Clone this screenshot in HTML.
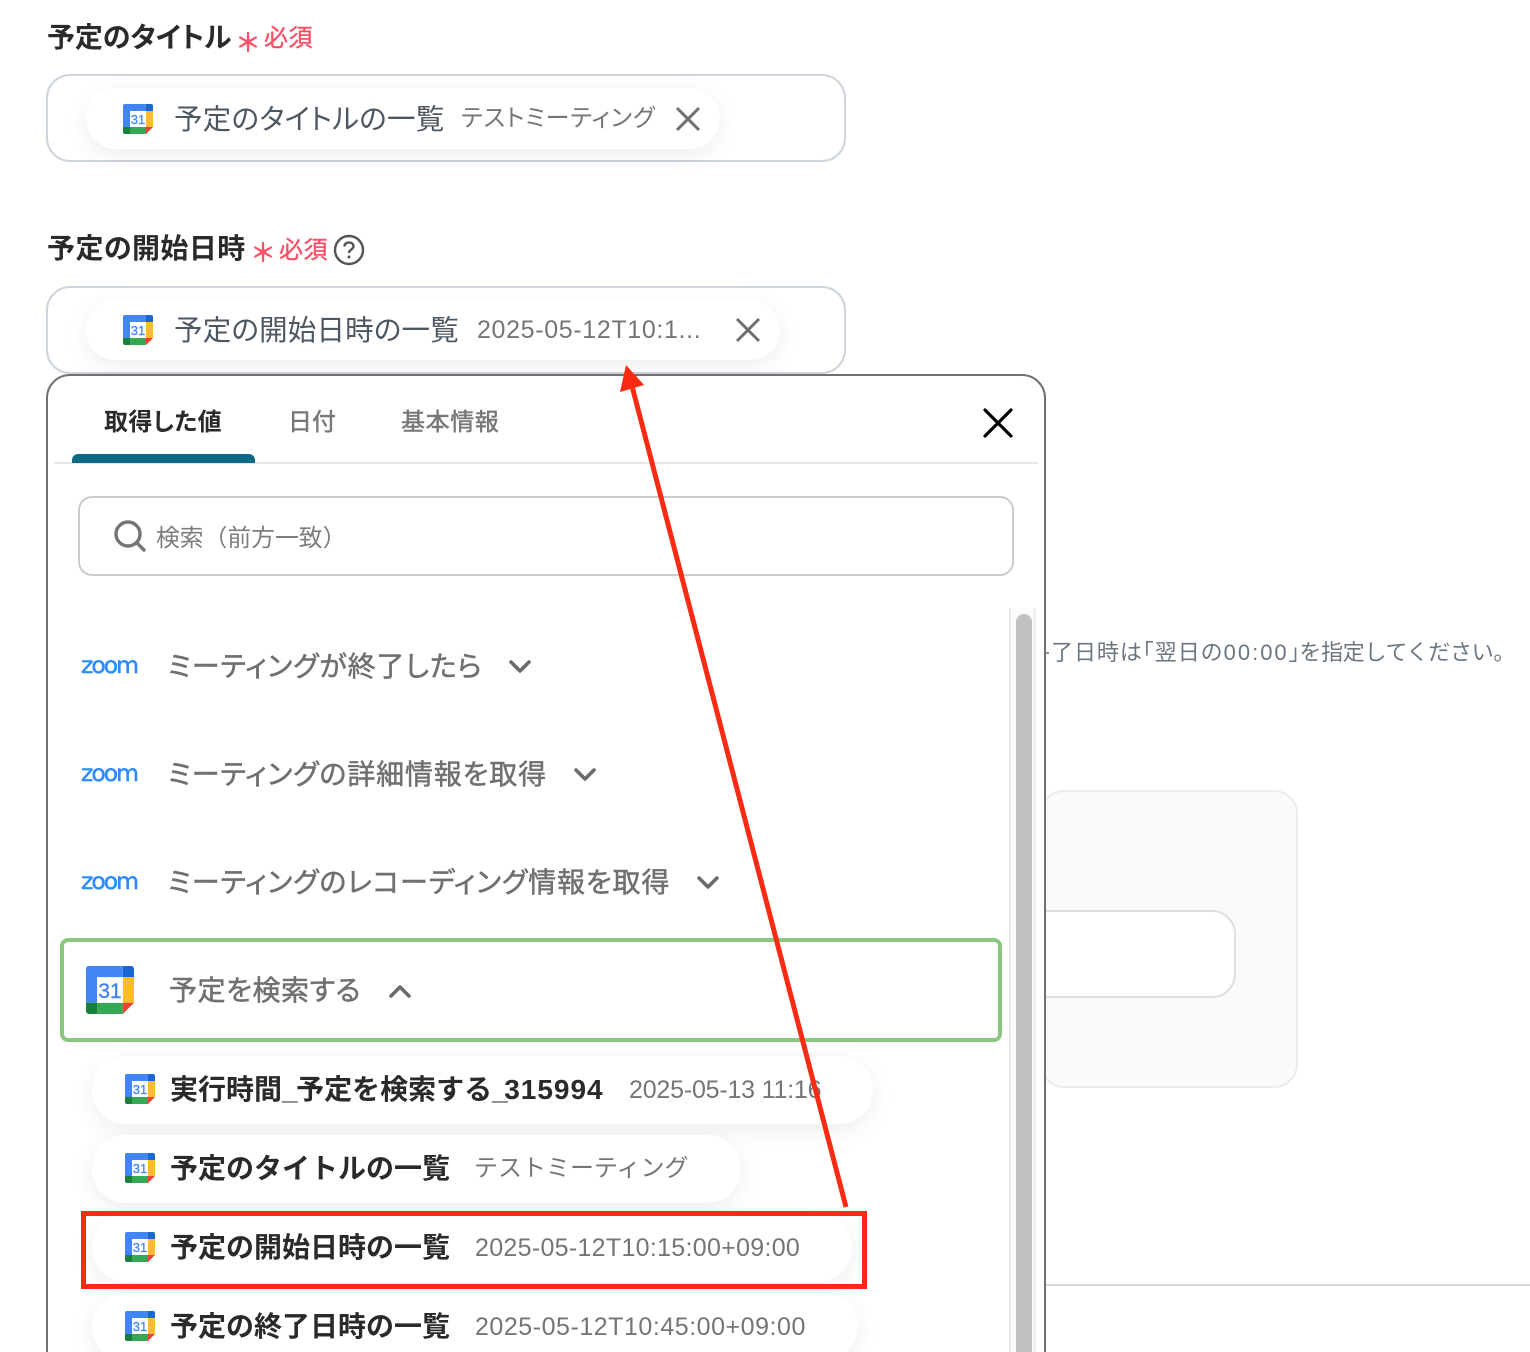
<!DOCTYPE html>
<html lang="ja"><head><meta charset="utf-8"><style>
html,body{margin:0;padding:0;background:#fff}
#p{position:relative;width:1530px;height:1352px;overflow:hidden;background:#fff;font-family:"Liberation Sans","Noto Sans CJK JP",sans-serif}
#p div,#p span.a,#p svg.a{position:absolute;white-space:nowrap;box-sizing:border-box}
.lab{font-size:28px;font-weight:700;color:#2a2a2a;line-height:36px;font-feature-settings:"palt"}
.req{font-size:24px;color:#fb5168;line-height:36px;letter-spacing:.5px;-webkit-text-stroke:.4px #fb5168}
.box{left:46px;width:800px;height:88px;border:2px solid #ced4db;border-radius:24px;background:#fff}
.chip{background:#fff;border-radius:32px;box-shadow:0 6px 24px rgba(0,0,0,.07)}
.ct{font-size:28.500px;color:#4d5761;line-height:40px;font-feature-settings:"palt"}
.cv{font-size:25px;color:#757575;line-height:36px;letter-spacing:.3px}
.tab{font-size:24px;color:#777;line-height:34px;-webkit-text-stroke:.5px #777}
.sec{font-size:28px;color:#707070;line-height:40px;font-feature-settings:"palt";-webkit-text-stroke:.5px #707070;letter-spacing:.85px}
.it{font-size:28px;font-weight:700;color:#2a2a2a;line-height:40px}
.ast{font-size:26px;line-height:36px;color:#fb5168;font-weight:700}
</style></head><body><div id="p">
<svg width="0" height="0" style="position:absolute"><defs>
<symbol id="cal" viewBox="0 0 30 30">
<path d="M2 0H23V7H7V23H0V2Q0 0 2 0Z" fill="#4285f4"/>
<path d="M23 0H28Q30 0 30 2V7H23Z" fill="#1967d2"/>
<rect x="23" y="7" width="7" height="16" fill="#fcbc2c"/>
<rect x="7" y="23" width="16" height="7" fill="#34a853"/>
<path d="M0 23H7V30H2Q0 30 0 28Z" fill="#188038"/>
<path d="M23 23H30L23 30Z" fill="#ea4335"/>
<rect x="7" y="7" width="16" height="16" fill="#fff"/>
<text x="15" y="20" text-anchor="middle" font-family="Liberation Sans" font-size="13" fill="#4285f4" stroke="#4285f4" stroke-width=".25">31</text>
</symbol>
<symbol id="zm" viewBox="0 0 60 22"><text x="1" y="18" textLength="58" lengthAdjust="spacing" font-family="DejaVu Sans" font-size="23.500" fill="#2d8cff" stroke="#2d8cff" stroke-width=".5">zoom</text></symbol>
</defs></svg>

<!-- background page -->
<div style="left:1040px;top:790px;width:258px;height:298px;background:#fafafa;border:2px solid #ececec;border-radius:24px"></div>
<div style="left:1000px;top:910px;width:236px;height:88px;background:#fff;border:2px solid #dcdfe3;border-radius:24px"></div>
<div style="left:1040px;top:1284px;width:490px;height:2px;background:#d5d9de"></div>
<div style="left:1046px;top:652px;width:3px;height:2px;background:#8a939b"></div>
<div style="left:1051px;top:637px;font-size:22px;line-height:32px;color:#6b7680"><span style="letter-spacing:.95px">了日時は｢翌日の</span><span style="letter-spacing:2px">00:00</span><span style="letter-spacing:-.3px">｣を指定してください。</span></div>

<!-- field 1 -->
<div class="lab" style="left:47px;top:20px;letter-spacing:-.1px">予定のタイトル</div>
<div class="ast" style="left:235px;top:25px">＊</div>
<div class="req" style="left:264px;top:21px">必須</div>
<div class="box" style="top:74px"></div>
<div class="chip" style="left:86px;top:88px;width:634px;height:61px"></div>
<svg class="a" style="left:123px;top:104px" width="30" height="30"><use href="#cal"/></svg>
<div class="ct" style="left:174px;top:100px;letter-spacing:.3px">予定のタイトルの一覧</div>
<div class="cv" style="left:461px;top:101px;font-size:24px;letter-spacing:.8px;font-feature-settings:'palt'">テストミーティング</div>
<svg class="a" style="left:675px;top:106px" width="26" height="26" fill="none" stroke="#6f6f6f" stroke-width="3"><path d="M2 2L24 24M24 2L2 24"/></svg>

<!-- field 2 -->
<div class="lab" style="left:47px;top:231px;letter-spacing:.45px">予定の開始日時</div>
<div class="ast" style="left:250px;top:235px">＊</div>
<div class="req" style="left:279px;top:233px">必須</div>
<svg class="a" style="left:333px;top:234px" width="32" height="32" fill="none" stroke="#555" stroke-width="2.400"><circle cx="16" cy="16" r="14"/><path d="M11.500 12.500C11.500 9.800 13.500 8.500 16 8.500C18.700 8.500 20.500 10 20.500 12.300C20.500 15.500 16 15.500 16 19"/><circle cx="16" cy="23" r="1" fill="#555" stroke-width="1"/></svg>
<div class="box" style="top:286px"></div>
<div class="chip" style="left:86px;top:300px;width:694px;height:60px"></div>
<svg class="a" style="left:123px;top:315px" width="30" height="30"><use href="#cal"/></svg>
<div class="ct" style="left:174px;top:311px;letter-spacing:.2px">予定の開始日時の一覧</div>
<div class="cv" style="left:477px;top:312px;letter-spacing:.65px">2025-05-12T10:1...</div>
<svg class="a" style="left:735px;top:317px" width="26" height="26" fill="none" stroke="#6f6f6f" stroke-width="3"><path d="M2 2L24 24M24 2L2 24"/></svg>

<!-- popup -->
<div style="left:46px;top:374px;width:1000px;height:1000px;background:#fff;border:2px solid #707070;border-radius:24px"></div>
<div class="tab" style="left:104px;top:406px;color:#2a2a2a;font-weight:700;-webkit-text-stroke:0;font-feature-settings:'palt';letter-spacing:.4px">取得した値</div>
<div class="tab" style="left:288px;top:406px">日付</div>
<div class="tab" style="left:401px;top:406px;letter-spacing:.6px">基本情報</div>
<div style="left:54px;top:462px;width:984px;height:2px;background:#e6e6e6"></div>
<div style="left:72px;top:454px;width:183px;height:9px;background:#0e6a84;border-radius:6px 6px 0 0"></div>
<svg class="a" style="left:982px;top:407px" width="32" height="32" fill="none" stroke="#000" stroke-width="3.200" stroke-linecap="round"><path d="M3 3L29 29M29 3L3 29"/></svg>
<div style="left:78px;top:496px;width:936px;height:80px;border:2px solid #cbcbcb;border-radius:14px"></div>
<svg class="a" style="left:113px;top:519px" width="34" height="34" fill="none" stroke="#757575" stroke-width="3.400"><circle cx="15" cy="15" r="12"/><path d="M23.500 23.500L31 31" stroke-linecap="round"/></svg>
<div style="left:156px;top:522px;font-size:23.800px;line-height:34px;color:#7d7d7d">検索（前方一致）</div>

<!-- scrollbar -->
<div style="left:1009px;top:608px;width:27px;height:744px;background:#fafafa;border-left:2px solid #e8e8e8;border-right:2px solid #eeeeee"></div>
<div style="left:1016px;top:614px;width:16px;height:738px;background:#c1c1c1;border-radius:8px 8px 0 0"></div>

<!-- sections -->
<svg class="a" style="left:80px;top:655px" width="60" height="22"><use href="#zm"/></svg>
<div class="sec" style="left:168px;top:647px">ミーティングが終了したら</div>
<svg class="a" style="left:508px;top:659px" width="24" height="16" fill="none" stroke="#6b6b6b" stroke-width="3.600" stroke-linecap="round" stroke-linejoin="round"><path d="M3 3L12 12L21 3"/></svg>
<svg class="a" style="left:80px;top:763px" width="60" height="22"><use href="#zm"/></svg>
<div class="sec" style="left:168px;top:755px">ミーティングの詳細情報を取得</div>
<svg class="a" style="left:573px;top:767px" width="24" height="16" fill="none" stroke="#6b6b6b" stroke-width="3.600" stroke-linecap="round" stroke-linejoin="round"><path d="M3 3L12 12L21 3"/></svg>
<svg class="a" style="left:80px;top:871px" width="60" height="22"><use href="#zm"/></svg>
<div class="sec" style="left:168px;top:863px">ミーティングのレコーディング情報を取得</div>
<svg class="a" style="left:696px;top:875px" width="24" height="16" fill="none" stroke="#6b6b6b" stroke-width="3.600" stroke-linecap="round" stroke-linejoin="round"><path d="M3 3L12 12L21 3"/></svg>

<div style="left:60px;top:938px;width:942px;height:104px;border:4px solid #8ac77f;border-radius:8px;background:#fff"></div>
<svg class="a" style="left:86px;top:966px" width="48" height="48"><use href="#cal"/></svg>
<div class="sec" style="left:169px;top:971px;letter-spacing:.55px">予定を検索する</div>
<svg class="a" style="left:388px;top:983px" width="24" height="16" fill="none" stroke="#6b6b6b" stroke-width="3.600" stroke-linecap="round" stroke-linejoin="round"><path d="M3 13L12 4L21 13"/></svg>

<!-- items -->
<div class="chip" style="left:92px;top:1056px;width:781px;height:68px;border-radius:34px"></div>
<svg class="a" style="left:125px;top:1074px" width="30" height="30"><use href="#cal"/></svg>
<div class="it" style="left:170px;top:1070px">実行時間<span style="letter-spacing:-1.5px">_</span>予定を検索する<span style="letter-spacing:-3.5px">_</span><span style="letter-spacing:1px">315994</span></div>
<div class="cv" style="left:629px;top:1072px;width:192px;overflow:hidden;letter-spacing:-.2px">2025-05-13 11:16</div>

<div class="chip" style="left:92px;top:1135px;width:649px;height:68px;border-radius:34px"></div>
<svg class="a" style="left:125px;top:1153px" width="30" height="30"><use href="#cal"/></svg>
<div class="it" style="left:170px;top:1149px">予定のタイトルの一覧</div>
<div class="cv" style="left:474px;top:1151px;font-size:24px;letter-spacing:0">テストミーティング</div>

<div class="chip" style="left:92px;top:1214px;width:760px;height:68px;border-radius:34px"></div>
<svg class="a" style="left:125px;top:1232px" width="30" height="30"><use href="#cal"/></svg>
<div class="it" style="left:170px;top:1228px">予定の開始日時の一覧</div>
<div class="cv" style="left:475px;top:1230px;letter-spacing:.3px">2025-05-12T10:15:00+09:00</div>

<div class="chip" style="left:92px;top:1293px;width:766px;height:68px;border-radius:34px"></div>
<svg class="a" style="left:125px;top:1311px" width="30" height="30"><use href="#cal"/></svg>
<div class="it" style="left:170px;top:1307px">予定の終了日時の一覧</div>
<div class="cv" style="left:475px;top:1309px;letter-spacing:.53px">2025-05-12T10:45:00+09:00</div>

<!-- annotations -->
<div style="left:81px;top:1211px;width:786px;height:78px;border:5px solid #fb2a13"></div>
<svg class="a" style="left:0;top:0" width="1530" height="1352" fill="none"><path d="M846 1207L632 386" stroke="#fb2a13" stroke-width="5"/><path d="M626 365L620 392L644 385Z" fill="#fb2a13"/></svg>
</div></body></html>
